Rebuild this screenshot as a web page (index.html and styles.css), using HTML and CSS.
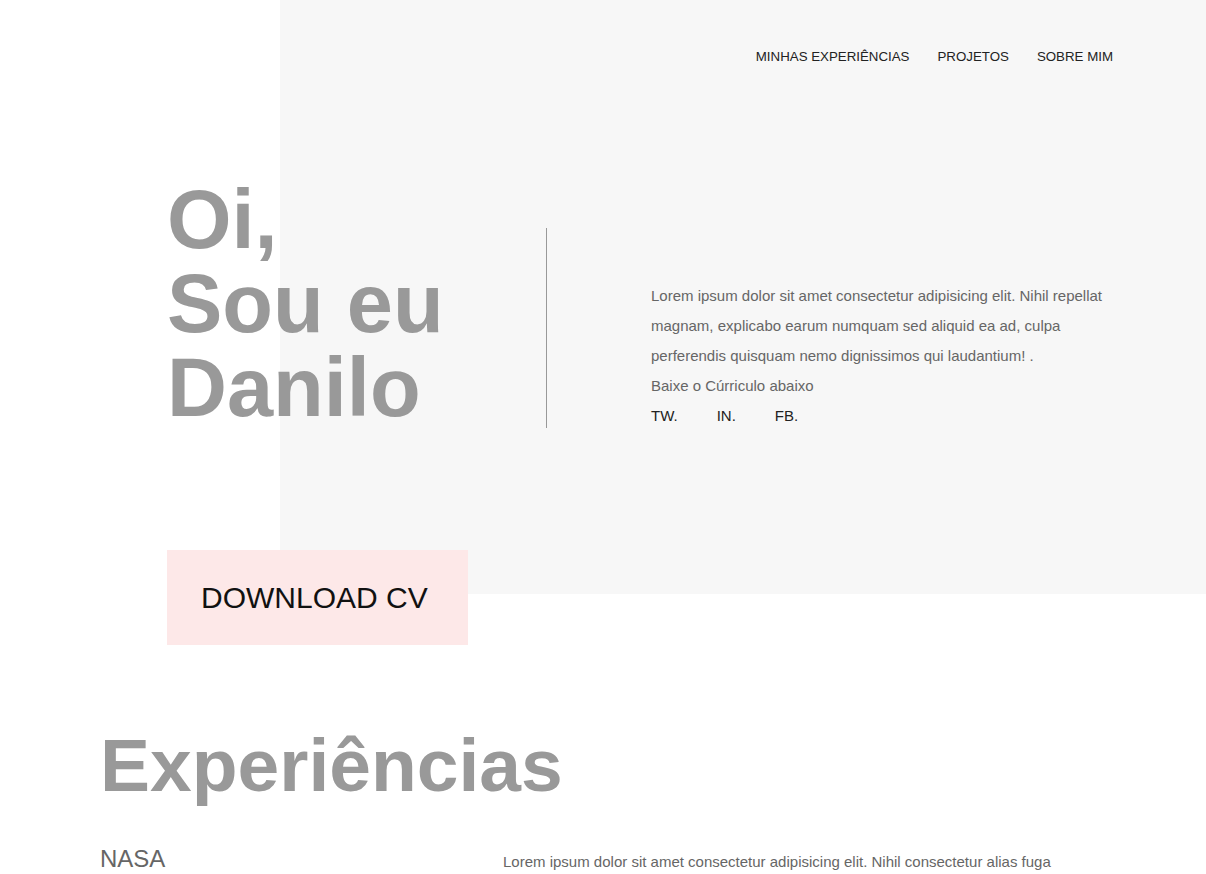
FILE: index.html
```html
<!DOCTYPE html>
<html lang="pt-BR">
<head>
<meta charset="utf-8">
<title>Danilo</title>
<link rel="stylesheet" href="styles.css">
</head>
<body>
<div class="top">
  <nav class="nav">
    <a href="#">MINHAS EXPERIÊNCIAS</a>
    <a href="#">PROJETOS</a>
    <a href="#">SOBRE MIM</a>
  </nav>
  <section class="hero">
    <h1 class="hero-title">Oi,<br>Sou eu<br>Danilo</h1>
    <div class="divider"></div>
    <div class="hero-text">
      <p>Lorem ipsum dolor sit amet consectetur adipisicing elit. Nihil repellat magnam, explicabo earum numquam sed aliquid ea ad, culpa perferendis quisquam nemo dignissimos qui laudantium! .</p>
      <p>Baixe o Cúrriculo abaixo</p>
      <div class="social">
        <a href="#">TW.</a>
        <a href="#">IN.</a>
        <a href="#">FB.</a>
      </div>
    </div>
  </section>
  <a class="download" href="#">DOWNLOAD CV</a>
</div>
<section class="experiences">
  <h2 class="exp-title">Experiências</h2>
  <div class="exp-row">
    <h3 class="exp-name">NASA</h3>
    <p class="exp-desc">Lorem ipsum dolor sit amet consectetur adipisicing elit. Nihil consectetur alias fuga</p>
  </div>
</section>
</body>
</html>
```
FILE: styles.css
```css
* { box-sizing: border-box; }
html, body { margin: 0; padding: 0; }
body {
  font-family: "Liberation Sans", Arial, sans-serif;
  background: #fff;
  color: #222;
}
a { text-decoration: none; color: inherit; }

.top {
  height: 594px;
  background: linear-gradient(90deg, #fff 280px, #f7f7f7 280px);
}

.nav {
  display: flex;
  justify-content: flex-end;
  gap: 28px;
  padding: 49px 93px 0 0;
  font-size: 13.3px;
  line-height: 16px;
  color: #222;
}

.hero {
  display: flex;
  align-items: flex-start;
  padding-left: 167px;
  margin-top: 113px;
}

.hero-title {
  margin: 0;
  width: 379px;
  font-size: 83px;
  line-height: 84px;
  font-weight: 700;
  color: #999;
}

.divider {
  width: 1px;
  height: 200px;
  margin-top: 50px;
  background: #999;
}

.hero-text {
  margin-left: 104px;
  margin-top: 103px;
  width: 462px;
  font-size: 15px;
  line-height: 30px;
  color: #666;
}
.hero-text p { margin: 0; }

.social {
  display: flex;
  gap: 39px;
  color: #222;
}

.download {
  display: block;
  width: 301px;
  height: 95px;
  margin: 119px 0 0 167px;
  padding-left: 34px;
  background: #fde8e8;
  color: #111;
  font-size: 30px;
  line-height: 95px;
}

.experiences {
  padding: 134px 0 0 100px;
}

.exp-title {
  margin: 0;
  font-size: 75px;
  line-height: 75px;
  font-weight: 700;
  color: #999;
}

.exp-row {
  display: flex;
  align-items: baseline;
  margin-top: 42px;
}

.exp-name {
  margin: 0;
  width: 403px;
  font-size: 24px;
  font-weight: 400;
  color: #666;
}

.exp-desc {
  margin: 0;
  font-size: 15px;
  color: #666;
}
```
